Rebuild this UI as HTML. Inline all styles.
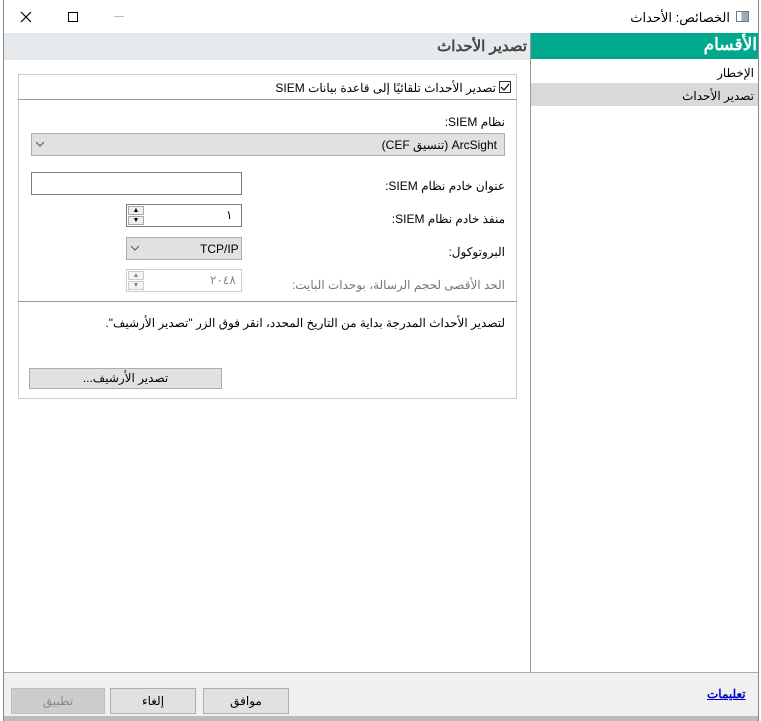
<!DOCTYPE html>
<html><head><meta charset="utf-8"><style>
*{margin:0;padding:0;box-sizing:border-box}
body{width:761px;height:721px;background:#fff;font-family:"Liberation Sans","Noto Sans CJK SC",sans-serif;font-size:12px;color:#000;position:relative;overflow:hidden}
.a{position:absolute}
.r{direction:rtl;white-space:nowrap}
</style></head><body>
<div class="a" style="left:3px;top:0;width:1px;height:721px;background:#888"></div>
<div class="a" style="left:758px;top:0;width:1px;height:721px;background:#888"></div>
<!-- title bar -->
<div class="a r" style="right:31px;top:10px;font-size:13px">الخصائص: الأحداث</div>
<div class="a" style="left:736px;top:11px;width:13px;height:11px;border:1px solid #777;background:linear-gradient(90deg,#fff 0 40%,#9ab 40%)"></div>
<svg class="a" style="left:20px;top:11px" width="12" height="12"><path d="M1 1L11 11M11 1L1 11" stroke="#000" stroke-width="1.2"/></svg>
<div class="a" style="left:68px;top:12px;width:10px;height:10px;border:1px solid #000"></div>
<div class="a" style="left:114px;top:16px;width:10px;height:1px;background:#bbb"></div>
<!-- header -->
<div class="a" style="left:4px;top:33px;width:527px;height:27px;background:#e6eaed"></div>
<div class="a r" style="right:234px;top:37px;font-size:15px;font-weight:bold;color:#444">تصدير الأحداث</div>
<div class="a" style="left:531px;top:33px;width:227px;height:26px;background:#00a88e"></div>
<div class="a r" style="right:4px;top:35px;font-size:17px;font-weight:bold;color:#fff">الأقسام</div>
<div class="a" style="left:530px;top:33px;width:1px;height:640px;background:#999"></div>
<div class="a r" style="right:7px;top:66px">الإخطار</div>
<div class="a" style="left:531px;top:83px;width:227px;height:23px;background:#d9d9d9"></div>
<div class="a r" style="right:7px;top:89px">تصدير الأحداث</div>
<!-- group -->
<div class="a" style="left:18px;top:74px;width:499px;height:325px;border:1px solid #ccc"></div>
<div class="a" style="left:18px;top:99px;width:499px;height:1px;background:#999"></div>
<div class="a" style="left:18px;top:301px;width:499px;height:1px;background:#999"></div>
<div class="a" style="left:499px;top:81px;width:12px;height:12px;border:1px solid #333"></div>
<svg class="a" style="left:500px;top:82px" width="10" height="10"><path d="M1 5L4 8L9 2" stroke="#000" fill="none" stroke-width="1.2"/></svg>
<div class="a r" style="right:265px;top:81px">تصدير الأحداث تلقائيًا إلى قاعدة بيانات SIEM</div>
<div class="a r" style="right:256px;top:115px">نظام SIEM:</div>
<div class="a" style="left:31px;top:133px;width:474px;height:23px;background:#e1e1e1;border:1px solid #adadad"></div>
<div class="a r" style="right:264px;top:138px">ArcSight (تنسيق CEF)</div>
<svg class="a" style="left:36px;top:142px" width="8" height="5"><path d="M0 0L4 4L8 0" stroke="#555" fill="none"/></svg>
<div class="a r" style="right:256px;top:179px">عنوان خادم نظام SIEM:</div>
<div class="a" style="left:31px;top:172px;width:211px;height:23px;border:1px solid #7a7a7a;background:#fff"></div>
<div class="a r" style="right:256px;top:212px">منفذ خادم نظام SIEM:</div>
<div class="a" style="left:126px;top:204px;width:116px;height:23px;border:1px solid #7a7a7a;background:#fff"></div>
<div class="a" style="left:128px;top:206px;width:16px;height:9px;border:1px solid #aaa;background:#eee;font-size:7px;text-align:center;line-height:7px">▲</div>
<div class="a" style="left:128px;top:216px;width:16px;height:9px;border:1px solid #aaa;background:#eee;font-size:7px;text-align:center;line-height:7px">▼</div>
<div class="a" style="left:226px;top:208px">١</div>
<div class="a r" style="right:256px;top:245px">البروتوكول:</div>
<div class="a" style="left:126px;top:237px;width:116px;height:23px;background:#e1e1e1;border:1px solid #adadad"></div>
<div class="a" style="left:200px;top:242px">TCP/IP</div>
<svg class="a" style="left:131px;top:246px" width="8" height="5"><path d="M0 0L4 4L8 0" stroke="#555" fill="none"/></svg>
<div class="a r" style="right:256px;top:278px;color:#777">الحد الأقصى لحجم الرسالة، بوحدات البايت:</div>
<div class="a" style="left:126px;top:269px;width:116px;height:23px;border:1px solid #ccc;background:#fff"></div>
<div class="a" style="left:128px;top:271px;width:16px;height:9px;border:1px solid #ccc;background:#f4f4f4;font-size:7px;text-align:center;line-height:7px;color:#888">▲</div>
<div class="a" style="left:128px;top:281px;width:16px;height:9px;border:1px solid #ccc;background:#f4f4f4;font-size:7px;text-align:center;line-height:7px;color:#888">▼</div>
<div class="a" style="left:210px;top:273px;color:#888">٢٠٤٨</div>
<div class="a r" style="right:256px;top:316px">لتصدير الأحداث المدرجة بداية من التاريخ المحدد، انقر فوق الزر "تصدير الأرشيف".</div>
<div class="a" style="left:29px;top:368px;width:193px;height:21px;background:#e1e1e1;border:1px solid #adadad;text-align:center;line-height:19px" dir="rtl">تصدير الأرشيف...</div>
<!-- bottom -->
<div class="a" style="left:4px;top:672px;width:754px;height:49px;background:#f0f0f0;border-top:1px solid #aaa"></div>
<div class="a" style="left:4px;top:716px;width:754px;height:5px;background:#bbb"></div>
<div class="a" style="left:11px;top:688px;width:94px;height:26px;background:#ccc;border:1px solid #bfbfbf;color:#888;text-align:center;line-height:24px">تطبيق</div>
<div class="a" style="left:110px;top:688px;width:86px;height:26px;background:#e1e1e1;border:1px solid #adadad;text-align:center;line-height:24px">إلغاء</div>
<div class="a" style="left:203px;top:688px;width:86px;height:26px;background:#e1e1e1;border:1px solid #adadad;text-align:center;line-height:24px">موافق</div>
<div class="a" style="left:707px;top:687px;color:#0000cc;text-decoration:underline;font-weight:bold">تعليمات</div>
</body></html>
